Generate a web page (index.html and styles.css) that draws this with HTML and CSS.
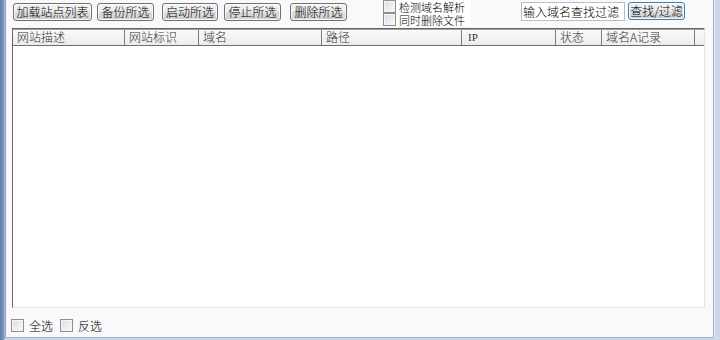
FILE: index.html
```html
<!DOCTYPE html>
<html lang="zh-CN">
<head>
    <meta charset="UTF-8">
    <title>站点管理</title>
    <link rel="stylesheet" href="styles.css">
</head>
<body>
    <div class="window">
        <div class="client">
            <div class="toolbar">
                <div class="actions">
                    <button class="btn btn-load">加载站点列表</button>
                    <button class="btn btn-backup">备份所选</button>
                    <button class="btn btn-start">启动所选</button>
                    <button class="btn btn-stop">停止所选</button>
                    <button class="btn btn-delete">删除所选</button>
                </div>
                <div class="options">
                    <label class="check"><span class="box"></span>检测域名解析</label>
                    <label class="check"><span class="box"></span>同时删除文件</label>
                </div>
                <div class="search">
                    <input type="text" class="search-input" value="输入域名查找过滤">
                    <button class="btn btn-find">查找/过滤</button>
                </div>
            </div>

            <div class="listview">
                <div class="header">
                    <div class="col col-desc">网站描述</div>
                    <div class="col col-id">网站标识</div>
                    <div class="col col-domain">域名</div>
                    <div class="col col-path">路径</div>
                    <div class="col col-ip">IP</div>
                    <div class="col col-state">状态</div>
                    <div class="col col-arec">域名A记录</div>
                    <div class="col col-fill"></div>
                </div>
                <div class="rows"></div>
            </div>

            <div class="footer">
                <label class="check"><span class="box"></span>全选</label>
                <label class="check"><span class="box"></span>反选</label>
            </div>
        </div>
    </div>
</body>
</html>
```

FILE: styles.css
```css
body {
    margin: 0;
    font-family: "Noto Sans CJK SC", "DejaVu Sans", sans-serif;
    font-size: 12px;
    font-weight: 300;
    color: #000;
}

.window {
    width: 720px;
    height: 340px;
    box-sizing: border-box;
    display: flex;
    padding: 0 6px 2px 0;
    background: linear-gradient(90deg, #5d7ea9 0, #7f9cc2 4px, #c9d7e8 5px);
}

.client {
    flex: 1;
    margin-left: 5px;
    display: flex;
    flex-direction: column;
    background: #f9f9fb;
    border-left: 1px solid #9aa5b3;
    border-right: 1px solid #a6b0bd;
    border-bottom: 1px solid #a6b0bd;
    box-shadow: 1px 0 0 #e6ebf2;
}

/* top bar */
.toolbar {
    height: 27px;
    display: flex;
    align-items: flex-start;
    padding-left: 7px;
}

.actions {
    display: flex;
    padding-top: 3px;
}

.btn {
    height: 18px;
    padding: 0;
    margin: 0;
    font-family: inherit;
    font-size: 12px;
    font-weight: 300;
    line-height: 14px;
    white-space: nowrap;
    color: #000;
    border: 1px solid #707070;
    border-radius: 3px;
    background: linear-gradient(#f3f3f3, #ebebeb 50%, #dddddd 51%, #cfcfcf);
    box-shadow: inset 0 0 0 1px rgba(255, 255, 255, 0.8);
}

.btn-load { width: 79px; }
.btn-backup { width: 57px; margin-left: 5px; }
.btn-start { width: 56px; margin-left: 8px; }
.btn-stop { width: 57px; margin-left: 6px; }
.btn-delete { width: 57px; margin-left: 9px; }

.options {
    margin-left: 36px;
    padding-right: 6px;
    background: #fff;
}

.options .check {
    height: 13px;
    font-size: 11px;
    line-height: 12px;
}

.check {
    display: flex;
    align-items: center;
    gap: 3px;
    line-height: 13px;
}

.box {
    width: 11px;
    height: 11px;
    flex: none;
    border: 1px solid #8e8f8f;
    background: linear-gradient(135deg, #dcdcdc, #fbfbfb);
    box-shadow: inset 0 0 0 1px #f4f4f4;
}

.search {
    display: flex;
    align-items: flex-start;
    margin-left: auto;
    margin-right: 28px;
    padding-top: 2px;
    gap: 3px;
}

.search-input {
    width: 101px;
    height: 17px;
    box-sizing: content-box;
    padding: 0 0 0 1px;
    margin: 0;
    font-family: inherit;
    font-size: 12px;
    font-weight: 300;
    color: #000;
    border: 1px solid #b5bfcc;
    background: #fff;
}

.btn-find {
    width: 57px;
    border-color: #3c7fb1;
}

/* list */
.listview {
    margin: 1px 8px 0 6px;
    height: 280px;
    box-sizing: border-box;
    display: flex;
    flex-direction: column;
    background: #fff;
    border-top: 1px solid #646464;
    border-left: 1px solid #646464;
    border-right: 1px solid #e3e3e3;
    border-bottom: 1px solid #e3e3e3;
}

.header {
    display: flex;
    height: 15px;
    border-top: 1px solid #a0a0a0;
    border-bottom: 1px solid #6d6d6d;
    background: linear-gradient(#fafafa, #ececec);
}

.col {
    box-sizing: border-box;
    padding-left: 4px;
    line-height: 14px;
    color: #333;
    border-right: 1px solid #7c7c7c;
    white-space: nowrap;
}

.col-desc { width: 112px; }
.col-id { width: 74px; }
.col-domain { width: 123px; }
.col-path { width: 140px; }
.col-ip { width: 94px; font-family: "Liberation Serif", serif; font-size: 11px; padding-left: 6px; }
.col-state { width: 46px; }
.col-arec { width: 93px; }
.col-fill { flex: 1; border-right: none; }

.rows {
    flex: 1;
}

.footer {
    display: flex;
    gap: 7px;
    padding: 11px 0 0 5px;
}

.footer .box {
    margin-right: 2px;
}
```
